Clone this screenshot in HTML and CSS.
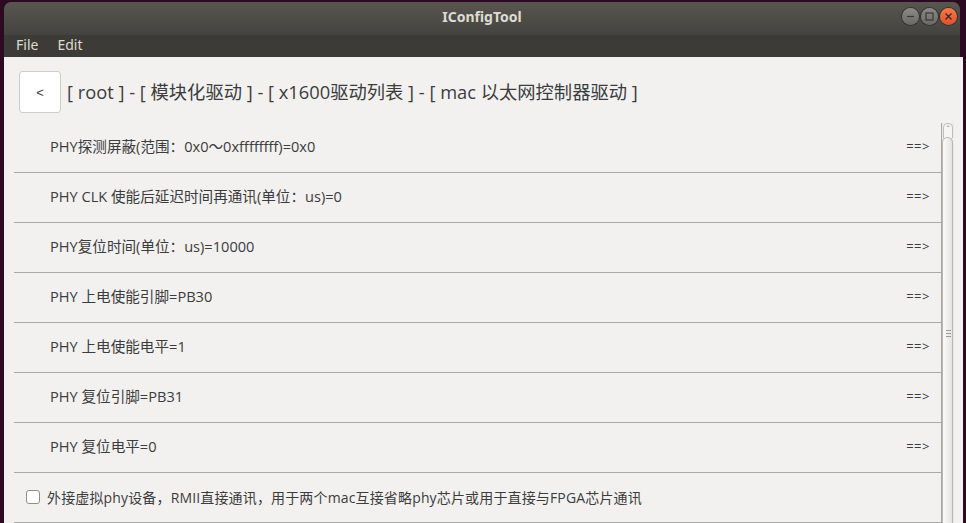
FILE: index.html
```html
<!DOCTYPE html>
<html lang="zh-CN">
<head>
  <meta charset="UTF-8">
  <title>IConfigTool</title>
  <link rel="stylesheet" href="styles.css">
</head>
<body>

  <div class="window">
    <div class="titlebar">
      <span class="title">IConfigTool</span>
      <div class="controls">
        <span class="ctl min"><svg width="17" height="17" viewBox="0 0 17 17"><line x1="5" y1="8.5" x2="12" y2="8.5" stroke="#3a3935" stroke-width="1.2"/></svg></span>
        <span class="ctl max"><svg width="17" height="17" viewBox="0 0 17 17"><rect x="5" y="5" width="7" height="7" fill="none" stroke="#3a3935" stroke-width="1.2"/></svg></span>
        <span class="ctl close"><svg width="17" height="17" viewBox="0 0 17 17"><path d="M5.5 5.5 L11.5 11.5 M11.5 5.5 L5.5 11.5" stroke="#3a2a22" stroke-width="1.3"/></svg></span>
      </div>
    </div>
    <div class="menubar">
      <span class="menu">File</span>
      <span class="menu">Edit</span>
    </div>

    <div class="content">
      <div class="crumbs">
        <button class="back">&lt;</button>
        <span class="path">[ root ] - [ 模块化驱动 ] - [ x1600驱动列表 ] - [ mac 以太网控制器驱动 ]</span>
      </div>

      <div class="listwrap">
        <div class="list">
          <div class="row"><span>PHY探测屏蔽(范围：0x0～0xffffffff)=0x0</span><span class="go">==&gt;</span></div>
          <div class="row"><span>PHY CLK 使能后延迟时间再通讯(单位：us)=0</span><span class="go">==&gt;</span></div>
          <div class="row"><span>PHY复位时间(单位：us)=10000</span><span class="go">==&gt;</span></div>
          <div class="row"><span>PHY 上电使能引脚=PB30</span><span class="go">==&gt;</span></div>
          <div class="row"><span>PHY 上电使能电平=1</span><span class="go">==&gt;</span></div>
          <div class="row"><span>PHY 复位引脚=PB31</span><span class="go">==&gt;</span></div>
          <div class="row"><span>PHY 复位电平=0</span><span class="go">==&gt;</span></div>
          <div class="row check"><span class="box"></span><span class="label">外接虚拟phy设备，RMII直接通讯，用于两个mac互接省略phy芯片或用于直接与FPGA芯片通讯</span></div>
        </div>
        <div class="scrollbar">
          <div class="cap">&#710;</div>
          <div class="thumb"><span class="grip"></span></div>
        </div>
      </div>
    </div>
  </div>

</body>
</html>
```

FILE: styles.css
```css
html, body { margin: 0; height: 100%; overflow: hidden; }
body { background: #2c0a22; font-family: "Open Sans", "Noto Sans CJK SC", sans-serif; color: #3c3c3c; }

.window { margin: 2px 0 0 4px; width: 959px; }
.titlebar { width: 956px; height: 33px; padding-bottom: 4px; box-sizing: border-box; border-radius: 7px 7px 0 0; background: linear-gradient(#58564f, #44433f); position: relative; display: flex; align-items: center; justify-content: center; }
.title { color: #dfdbd2; font-family: "Noto Sans", sans-serif; font-weight: bold; font-size: 14px; }
.controls { position: absolute; right: 3px; top: 6px; display: flex; gap: 2px; }
.ctl { width: 17px; height: 17px; border-radius: 50%; display: flex; background: linear-gradient(#8b8a86, #6a6965); box-shadow: 0 0 0 1px #34332f; }
.ctl.close { background: linear-gradient(#f47a4c, #e0512a); }

.menubar { width: 956px; height: 22px; background: #3c3b37; display: flex; align-items: center; gap: 19px; padding: 0 0 3px 12px; box-sizing: border-box; }
.menu { color: #dfdbd2; font-family: "Noto Sans", sans-serif; font-size: 14px; }

.content { background: #f2f1f0; height: 466px; }
.crumbs { display: flex; align-items: center; padding: 14px 0 0 15px; gap: 6px; }
.back { width: 42px; height: 42px; background: #fff; border: 1px solid #cfcdc9; border-radius: 3px; font-size: 13px; color: #3c3c3c; padding: 0; }
.path { font-size: 18.3px; color: #3c3c3c; padding-bottom: 2px; }

.listwrap { display: flex; margin: 10px 0 0 10px; }
.list { width: 927px; }
.row { height: 49px; border-bottom: 1px solid #aaa9a7; display: flex; align-items: center; justify-content: space-between; padding: 0 11px 4px 36px; box-sizing: border-box; height: 50px; font-size: 14.6px; }
.go { font-size: 13px; letter-spacing: 0.5px; color: #3a3d44; }
.row.check { justify-content: flex-start; padding: 0 0 2px 12px; gap: 7px; font-size: 14px; }
.label { letter-spacing: 0.15px; }
.box { width: 12px; height: 12px; border: 1px solid #8f8d89; border-radius: 3px; background: #fff; }

.scrollbar { width: 12px; height: 400px; border-left: 1px solid #aaa9a7; background: #ebeae8; position: relative; }
.cap { height: 14px; margin: 0 1px; border: 1px solid #bfbdba; border-bottom: none; border-radius: 6px 6px 0 0; font-size: 9px; text-align: center; line-height: 12px; color: #8a8884; background: #f6f5f4; }
.thumb { position: absolute; left: 0; right: 1px; top: 14px; bottom: 0; border: 1px solid #b8b6b3; border-bottom: none; border-radius: 6px 6px 0 0; background: linear-gradient(90deg, #fbfbfa, #e4e3e1); }
.grip { position: absolute; left: 3px; top: 192px; width: 5px; height: 7px; background: repeating-linear-gradient(#9a9894 0 1px, transparent 1px 3px); }
```
